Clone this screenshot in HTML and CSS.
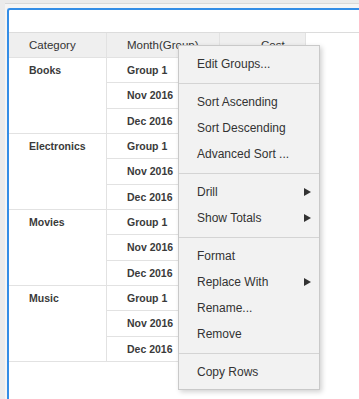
FILE: index.html
```html
<!DOCTYPE html>
<html>
	<head>
		<meta charset="UTF-8">
		<title>Pivot</title>
		<link rel="stylesheet" href="styles.css">
	</head>
	<body>
		<div class="frame">
			<div class="panel">
				<div class="panel-head"></div>
				<div class="grid-wrap">
					<table class="grid">
						<thead>
							<tr>
								<th class="c-cat">Category</th>
								<th class="c-month">Month(Group)</th>
								<th class="c-cost">Cost</th>
							</tr>
						</thead>
						<tbody>
							<tr>
								<td class="c-cat group-end" rowspan="3">Books</td>
								<td class="c-month">Group 1</td>
								<td class="c-cost"></td>
							</tr>
							<tr>
								<td class="c-month">Nov 2016</td>
								<td class="c-cost"></td>
							</tr>
							<tr>
								<td class="c-month">Dec 2016</td>
								<td class="c-cost"></td>
							</tr>
							<tr>
								<td class="c-cat group-end" rowspan="3">Electronics</td>
								<td class="c-month">Group 1</td>
								<td class="c-cost"></td>
							</tr>
							<tr>
								<td class="c-month">Nov 2016</td>
								<td class="c-cost"></td>
							</tr>
							<tr>
								<td class="c-month">Dec 2016</td>
								<td class="c-cost"></td>
							</tr>
							<tr>
								<td class="c-cat group-end" rowspan="3">Movies</td>
								<td class="c-month">Group 1</td>
								<td class="c-cost"></td>
							</tr>
							<tr>
								<td class="c-month">Nov 2016</td>
								<td class="c-cost"></td>
							</tr>
							<tr>
								<td class="c-month">Dec 2016</td>
								<td class="c-cost"></td>
							</tr>
							<tr>
								<td class="c-cat group-end" rowspan="3">Music</td>
								<td class="c-month">Group 1</td>
								<td class="c-cost"></td>
							</tr>
							<tr>
								<td class="c-month">Nov 2016</td>
								<td class="c-cost"></td>
							</tr>
							<tr>
								<td class="c-month">Dec 2016</td>
								<td class="c-cost"></td>
							</tr>
						</tbody>
					</table>
				</div>

				<!-- context menu -->
				<ul class="menu">
					<li>Edit Groups...</li>
					<li class="sep"></li>
					<li>Sort Ascending</li>
					<li>Sort Descending</li>
					<li>Advanced Sort ...</li>
					<li class="sep"></li>
					<li class="sub">Drill</li>
					<li class="sub">Show Totals</li>
					<li class="sep"></li>
					<li>Format</li>
					<li class="sub">Replace With</li>
					<li>Rename...</li>
					<li>Remove</li>
					<li class="sep"></li>
					<li>Copy Rows</li>
				</ul>
			</div>
		</div>
	</body>
</html>
```

FILE: styles.css
```css
html, body{
	margin: 0;
	padding: 0;
	height: 399px;
	overflow: hidden;
	background-color: #ebebeb;
	font-family: "Liberation Sans", Arial, sans-serif;
	color: #333;
}

.frame{
	margin: 3px 0 0 5px;
	height: 396px;
	box-sizing: border-box;
	border-top: 1px solid #d9d9d9;
	background-color: #f5f5f5;
	padding: 4px 0 0 2px;
}

.panel{
	position: relative;
	height: 100%;
	box-sizing: border-box;
	background-color: #fff;
	border-top: 2px solid #338de6;
	border-left: 2px solid #338de6;
	border-top-left-radius: 3px;
}

.panel-head{
	height: 22px;
}

.grid-wrap{
	border-top: 1px solid #dcdcdc;
}

.grid{
	border-collapse: separate;
	border-spacing: 0;
}

.grid th,
.grid td{
	padding: 0 20px;
	height: 24.33px;
	line-height: 24px;
	border-bottom: 1px solid #e2e2e2;
	border-right: 1px solid #e2e2e2;
	white-space: nowrap;
	vertical-align: middle;
}

.grid th{
	height: 24px;
	font-size: 11.5px;
	font-weight: normal;
	background-color: #efefef;
	text-align: left;
}

.grid td{
	font-size: 10.5px;
	font-weight: bold;
	color: #3a3a3a;
}

.c-cat{
	width: 57px;
}
.c-month{
	width: 71px;
}
.c-cost{
	width: 45px;
	text-align: right;
}
.grid th.c-cost{
	text-align: right;
}
.grid td.c-cat{
	vertical-align: top;
}

.menu{
	position: absolute;
	left: 169px;
	top: 35px;
	width: 140px;
	margin: 0;
	padding: 5px 0 4px;
	list-style: none;
	background-color: #f2f2f2;
	border: 1px solid #c9c9c9;
	box-shadow: 2px 2px 5px rgba(0, 0, 0, 0.18);
	font-size: 12px;
	color: #333;
}

.menu li{
	position: relative;
	height: 26px;
	line-height: 26px;
	padding-left: 18px;
}

.menu li.sep{
	height: 0;
	padding: 0;
	margin: 6px 0 5px;
	border-top: 1px solid #d4d4d4;
}

.menu li.sub:after{
	content: "";
	position: absolute;
	right: 8px;
	top: 9px;
	border-left: 7px solid #333;
	border-top: 4px solid transparent;
	border-bottom: 4px solid transparent;
}
```
